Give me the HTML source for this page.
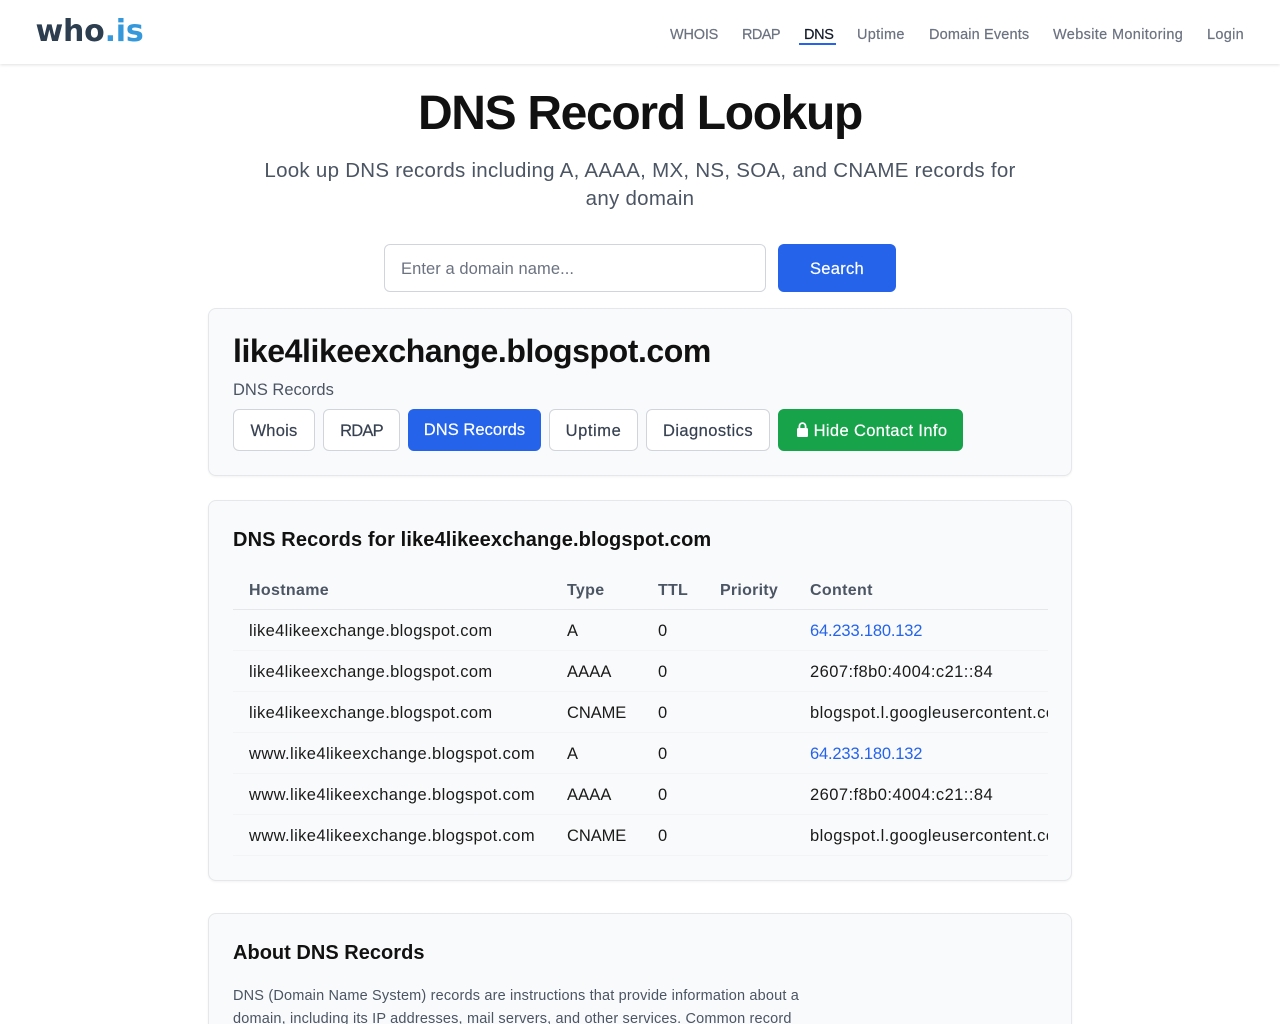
<!DOCTYPE html>
<html lang="en">
<head>
<meta charset="utf-8">
<title>DNS Record Lookup - who.is</title>
<style>
*{box-sizing:border-box}
html,body{margin:0;padding:0;width:1280px;height:1024px;overflow:hidden;background:#fff}
body{position:relative;font-family:"Liberation Sans",Arial,sans-serif;font-size:16.5px;color:#111}
a{text-decoration:none;color:inherit}
.abs{position:absolute;white-space:nowrap}
header{position:absolute;left:0;top:0;width:1280px;height:64px;background:#fff;box-shadow:0 1px 3px rgba(0,0,0,.12)}
.logo{position:absolute;left:35.5px;top:12px;line-height:40px;font-family:"DejaVu Sans",sans-serif;font-weight:700;font-size:30px;letter-spacing:-.2px;color:#2c3e50}
.logo span{color:#3498db}
nav a{position:absolute;top:24.5px;line-height:20px;font-size:14.5px;letter-spacing:.3px;color:#6b7280;white-space:nowrap;-webkit-text-stroke:.2px #6b7280}
nav a.on{color:#111827;-webkit-text-stroke:.2px #111827}
.ul{position:absolute;left:799px;top:43px;width:37px;height:2px;background:#2563eb}
h1{position:absolute;left:0;width:1280px;top:85px;margin:0;text-align:center;font-size:48px;line-height:58px;font-weight:700;letter-spacing:-1.33px;color:#111}
.sub{position:absolute;left:0;width:1280px;top:157px;margin:0;text-align:center;font-size:20.5px;line-height:28px;letter-spacing:.27px;color:#4b5563}
.input{position:absolute;left:384px;top:244px;width:382px;height:48px;border:1px solid #d1d5db;border-radius:6px;background:#fff;padding-left:16px;line-height:48px;color:#6b7280;letter-spacing:.07px}
.btn{position:absolute;display:block;border-radius:6px;text-align:center;white-space:nowrap}
.search{left:778px;top:244px;width:118px;height:48px;line-height:50px;background:#2563eb;color:#fff;letter-spacing:.3px;-webkit-text-stroke:.2px #fff}
.card{position:absolute;left:208px;width:864px;background:#f9fafb;border:1px solid #e5e7eb;border-radius:8px;box-shadow:0 1px 2px rgba(0,0,0,.05)}
.t{top:409px;height:42px;line-height:42px;background:#fff;border:1px solid #d1d5db;color:#374151;letter-spacing:.25px;-webkit-text-stroke:.2px #374151}
.a{background:#2563eb;border-color:#2563eb;color:#fff;-webkit-text-stroke:.2px #fff;line-height:41px;letter-spacing:.05px}
.g{background:#16a34a;border-color:#16a34a;color:#fff;-webkit-text-stroke:.2px #fff}
.wrap{position:absolute;left:233px;top:569px;width:815px;height:288px;overflow:hidden}
table{border-collapse:separate;border-spacing:0;table-layout:fixed;width:900px}
th,td{padding:2px 0 0 16px;height:41px;text-align:left;white-space:nowrap;letter-spacing:.35px}
th{font-weight:700;color:#4b5563;border-bottom:1px solid #e5e7eb;font-size:16px;letter-spacing:.33px;padding-top:3px}
td{border-bottom:1px solid #f3f4f6;color:#1a1a1a}
td a{color:#2563eb;letter-spacing:-.17px}
.w{letter-spacing:.4px}
.c{letter-spacing:-.07px}
.f{letter-spacing:.1px}
.v{letter-spacing:.44px}
.b{letter-spacing:.4px}
h2{position:absolute;margin:0;left:233px;font-size:20px;line-height:28px;font-weight:700;letter-spacing:.13px;color:#111;white-space:nowrap}
.about{position:absolute;left:233px;top:985px;margin:0;font-size:14.5px;line-height:23px;letter-spacing:.17px;color:#4b5563;white-space:nowrap}
</style>
</head>
<body>
<header>
  <a class="logo" href="#">who<span>.is</span></a>
  <nav>
    <a href="#" style="left:670px;letter-spacing:-.2px">WHOIS</a>
    <a href="#" style="left:742px;letter-spacing:-.6px">RDAP</a>
    <a href="#" class="on" style="left:804px;letter-spacing:-.35px">DNS</a>
    <a href="#" style="left:857px">Uptime</a>
    <a href="#" style="left:929px;letter-spacing:.15px">Domain Events</a>
    <a href="#" style="left:1053px;letter-spacing:.35px">Website Monitoring</a>
    <a href="#" style="left:1207px">Login</a>
  </nav>
  <div class="ul"></div>
</header>

<h1>DNS Record Lookup</h1>
<p class="sub">Look up DNS records including A, AAAA, MX, NS, SOA, and CNAME records for<br>any domain</p>

<div class="input">Enter a domain name...</div>
<a class="btn search" href="#">Search</a>

<div class="card" style="top:308px;height:168px"></div>
<div class="abs" style="left:233px;top:331px;font-size:32px;line-height:40px;font-weight:700;letter-spacing:-.43px;color:#111">like4likeexchange.blogspot.com</div>
<div class="abs" style="left:233px;top:379px;line-height:22px;color:#4b5563">DNS Records</div>
<a class="btn t" href="#" style="left:233px;width:82px">Whois</a>
<a class="btn t" href="#" style="left:323px;width:77px;letter-spacing:-.75px">RDAP</a>
<a class="btn t a" href="#" style="left:408px;width:133px">DNS Records</a>
<a class="btn t" href="#" style="left:549px;width:89px;letter-spacing:.58px">Uptime</a>
<a class="btn t" href="#" style="left:646px;width:124px;letter-spacing:.43px">Diagnostics</a>
<a class="btn t g" href="#" style="left:778px;width:185px;padding-left:20px;letter-spacing:.37px">Hide Contact Info</a>
<svg class="abs" style="left:796px;top:422px" width="13" height="16" viewBox="0 0 13 16"><path d="M3.4 7V4.2a3.1 3.1 0 0 1 6.2 0V7" fill="none" stroke="#fff" stroke-width="1.8"/><rect x="1" y="6" width="11" height="9" rx="1.4" fill="#fff"/></svg>

<div class="card" style="top:500px;height:381px"></div>
<h2 style="top:526px">DNS Records for like4likeexchange.blogspot.com</h2>
<div class="wrap">
<table>
<colgroup><col style="width:318px"><col style="width:91px"><col style="width:62px"><col style="width:90px"><col style="width:339px"></colgroup>
<thead><tr><th>Hostname</th><th>Type</th><th style="letter-spacing:.2px">TTL</th><th style="letter-spacing:.25px">Priority</th><th>Content</th></tr></thead>
<tbody>
<tr><td>like4likeexchange.blogspot.com</td><td>A</td><td>0</td><td></td><td><a href="#">64.233.180.132</a></td></tr>
<tr><td>like4likeexchange.blogspot.com</td><td class="f">AAAA</td><td>0</td><td></td><td class="v">2607:f8b0:4004:c21::84</td></tr>
<tr><td>like4likeexchange.blogspot.com</td><td class="c">CNAME</td><td>0</td><td></td><td class="b">blogspot.l.googleusercontent.com</td></tr>
<tr><td class="w">www.like4likeexchange.blogspot.com</td><td>A</td><td>0</td><td></td><td><a href="#">64.233.180.132</a></td></tr>
<tr><td class="w">www.like4likeexchange.blogspot.com</td><td class="f">AAAA</td><td>0</td><td></td><td class="v">2607:f8b0:4004:c21::84</td></tr>
<tr><td class="w">www.like4likeexchange.blogspot.com</td><td class="c">CNAME</td><td>0</td><td></td><td class="b">blogspot.l.googleusercontent.com</td></tr>
</tbody>
</table>
</div>

<div class="card" style="top:913px;height:200px"></div>
<h2 style="top:939px;letter-spacing:.02px">About DNS Records</h2>
<p class="about">DNS (Domain Name System) records are instructions that provide information about a<br>domain, including its IP addresses, mail servers, and other services. Common record</p>
</body>
</html>
